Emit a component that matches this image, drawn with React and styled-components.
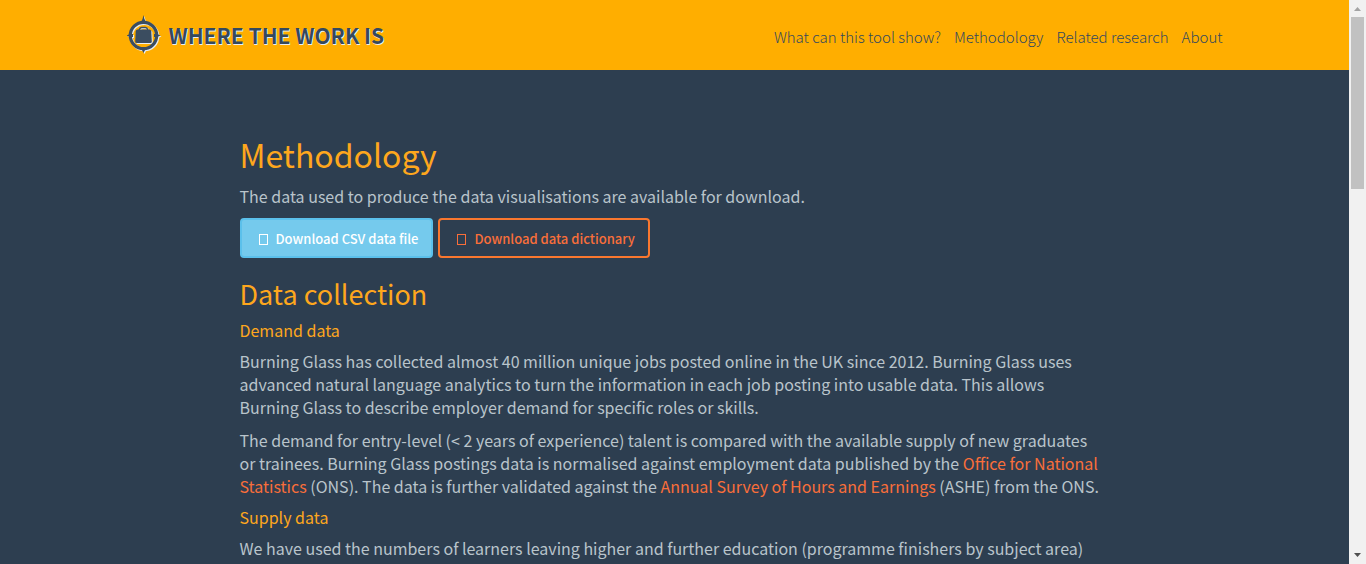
import React from 'react';
import styled, { createGlobalStyle, css } from 'styled-components';

const GlobalStyle = createGlobalStyle`
  * { box-sizing: border-box; }
  body {
    margin: 0;
    background: #2d3e50;
    color: #b9c4cb;
    font-family: "Source Sans Pro", "Noto Sans CJK SC", sans-serif;
    font-size: 16px;
    line-height: 23px;
  }
`;

const Window = styled.div`
  display: flex;
  height: 100vh;
  overflow: hidden;
`;

const Page = styled.div`
  flex: 1;
  min-width: 0;
  overflow: hidden;
`;

const Header = styled.header`
  background: #ffae00;
  padding: 0 32px;
`;

const HeaderInner = styled.div`
  display: flex;
  align-items: center;
  justify-content: space-between;
  max-width: 1096px;
  height: 70px;
  margin: 0 auto;
`;

const Brand = styled.a`
  display: flex;
  align-items: center;
  gap: 6px;
  color: #34495e;
  font-size: 21px;
  font-weight: 700;
  line-height: 32px;
  text-decoration: none;
  text-shadow: 1px 1px 0 #e9eef2;
`;

const BrandMark = styled.svg`
  display: block;
  width: 36px;
  height: 40px;
`;

const Nav = styled.nav`
  display: flex;
  gap: 13px;
  padding-top: 2px;
`;

const NavLink = styled.a`
  color: #34495e;
  font-size: 15px;
  font-weight: 300;
  text-decoration: none;
`;

const Main = styled.main`
  max-width: 902px;
  margin: 0 auto;
  padding: 64px 22px 0 16px;
`;

const Title = styled.h1`
  margin: 0 0 10px;
  color: #fea71d;
  font-size: 32px;
  font-weight: 400;
  line-height: 41px;
`;

const SectionTitle = styled.h2`
  margin: 19px 0 10px;
  color: #fea71d;
  font-size: 27px;
  font-weight: 400;
  line-height: 34px;
`;

const SubTitle = styled.h3`
  margin: 0 0 10px;
  color: #fea71d;
  font-size: 16px;
  font-weight: 400;
  line-height: 19px;
`;

const Paragraph = styled.p`
  margin: 0 0 10px;
`;

const TextLink = styled.a`
  color: #f96e3a;
  text-decoration: none;
`;

const Actions = styled.div`
  display: flex;
  gap: 5px;
`;

const Button = styled.button`
  display: flex;
  align-items: center;
  gap: 8px;
  height: 40px;
  padding: 2px 13px 0 17px;
  border: 2px solid;
  border-radius: 4px;
  font-family: inherit;
  font-size: 13px;
  font-weight: 500;
  line-height: 20px;
  ${({ $filled }) =>
    $filled
      ? css`
          border-color: #5bc0eb;
          background: #75caed;
          color: #ffffff;
        `
      : css`
          border-color: #f9772f;
          background: transparent;
          color: #f96e3a;
        `}
`;

const Glyph = styled.span`
  width: 9px;
  height: 11px;
  border: 1px solid currentColor;
`;

const ScrollRail = styled.div`
  display: flex;
  flex-direction: column;
  flex: 0 0 17px;
  background: #f1f1f1;
`;

const ScrollArrow = styled.svg`
  display: block;
  width: 17px;
  height: 17px;
  fill: ${({ $active }) => ($active ? '#505050' : '#a3a3a3')};
`;

const ScrollTrack = styled.div`
  flex: 1;
  padding: 0 2px;
`;

const ScrollThumb = styled.div`
  height: 32.5%;
  background: #c1c1c1;
`;

const NAV = ['What can this tool show?', 'Methodology', 'Related research', 'About'];

function MarkShape() {
  return (
    <>
      <circle cx="16.500" cy="20.500" r="13.200" fill="none" stroke="currentColor" strokeWidth="3.200" />
      <path
        fill="currentColor"
        d="M16.500 0q.8 5 2.500 7h-5q1.700-2 2.500-7zM-.5 20.500l3.500-1.500h3v3H3zM33.500 20.500L30 19h-3v3h3zM16.500 38l-1.500-3v-3h3v3z"
      />
      <path
        fill="currentColor"
        d="M10.500 14.500h12q1.500 0 1.800 1.500l.5 10.500q0 1.500-1.500 1.500H9.700q-1.500 0-1.500-1.500l.5-10.500q.3-1.500 1.800-1.500z"
      />
      <path d="M12 15q1-2.500 2.500-2.500h4q1.500 0 2.500 2.500" fill="none" stroke="currentColor" strokeWidth="1.500" />
    </>
  );
}

function Logo() {
  return (
    <BrandMark viewBox="0 0 36 40" aria-hidden="true">
      <g color="#e9eef2" transform="translate(1 1)">
        <MarkShape />
      </g>
      <g color="#3b4d60">
        <MarkShape />
      </g>
    </BrandMark>
  );
}

export default function App() {
  return (
    <>
      <GlobalStyle />
      <Window>
        <Page>
          <Header>
            <HeaderInner>
              <Brand href="#home">
                <Logo />
                WHERE THE WORK IS
              </Brand>
              <Nav>
                {NAV.map((label) => (
                  <NavLink key={label} href="#page">{label}</NavLink>
                ))}
              </Nav>
            </HeaderInner>
          </Header>
          <Main>
            <Title>Methodology</Title>
            <Paragraph>
              The data used to produce the data visualisations are available for download.
            </Paragraph>
            <Actions>
              <Button type="button" $filled>
                <Glyph />
                Download CSV data file
              </Button>
              <Button type="button">
                <Glyph />
                Download data dictionary
              </Button>
            </Actions>
            <SectionTitle>Data collection</SectionTitle>
            <SubTitle>Demand data</SubTitle>
            <Paragraph>
              Burning Glass has collected almost 40 million unique jobs posted online in the UK
              since 2012. Burning Glass uses advanced natural language analytics to turn the
              information in each job posting into usable data. This allows Burning Glass to
              describe employer demand for specific roles or skills.
            </Paragraph>
            <Paragraph>
              The demand for entry-level (&lt; 2 years of experience) talent is compared with the
              available supply of new graduates or trainees. Burning Glass postings data is
              normalised against employment data published by the{' '}
              <TextLink href="#ons">Office for National Statistics</TextLink> (ONS). The data is
              further validated against the{' '}
              <TextLink href="#ashe">Annual Survey of Hours and Earnings</TextLink> (ASHE) from
              the ONS.
            </Paragraph>
            <SubTitle>Supply data</SubTitle>
            <Paragraph>
              We have used the numbers of learners leaving higher and further education (programme
              finishers by subject area)
            </Paragraph>
          </Main>
        </Page>
        <ScrollRail aria-hidden="true">
          <ScrollArrow viewBox="0 0 17 17">
            <path d="M5 11h7L8.500 7z" />
          </ScrollArrow>
          <ScrollTrack>
            <ScrollThumb />
          </ScrollTrack>
          <ScrollArrow viewBox="0 0 17 17" $active>
            <path d="M5 6h7l-3.500 4z" />
          </ScrollArrow>
        </ScrollRail>
      </Window>
    </>
  );
}
